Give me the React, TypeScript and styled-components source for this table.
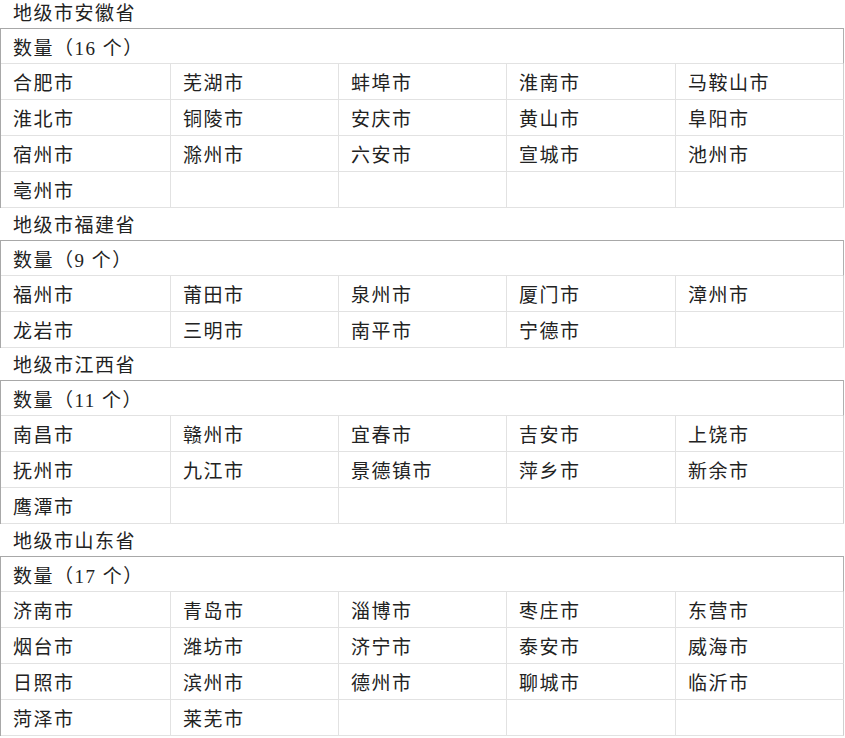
import styled, { createGlobalStyle } from "styled-components";

interface Province {
  name: string
  cities: string[]
}

const provinces: Province[] = [
  {
    name: "安徽省",
    cities: ["合肥市", "芜湖市", "蚌埠市", "淮南市", "马鞍山市", "淮北市", "铜陵市", "安庆市", "黄山市", "阜阳市", "宿州市", "滁州市", "六安市", "宣城市", "池州市", "亳州市"],
  },
  {
    name: "福建省",
    cities: ["福州市", "莆田市", "泉州市", "厦门市", "漳州市", "龙岩市", "三明市", "南平市", "宁德市"],
  },
  {
    name: "江西省",
    cities: ["南昌市", "赣州市", "宜春市", "吉安市", "上饶市", "抚州市", "九江市", "景德镇市", "萍乡市", "新余市", "鹰潭市"],
  },
  {
    name: "山东省",
    cities: ["济南市", "青岛市", "淄博市", "枣庄市", "东营市", "烟台市", "潍坊市", "济宁市", "泰安市", "威海市", "日照市", "滨州市", "德州市", "聊城市", "临沂市", "菏泽市", "莱芜市"],
  },
]

const GlobalStyle = createGlobalStyle`
body {
  margin: 0;
  background: #fff;
  font-family: "Liberation Serif", "Noto Sans CJK SC", serif;
  color: #222;
}
`

export default function App() {
  return (
    <>
      <GlobalStyle />
      <Page>
        {provinces.map((p, i) => {
          const padded = [...p.cities]
          while (padded.length % 5 !== 0) padded.push("")
          return (
            <Section key={p.name}>
              <Title first={i === 0}>地级市{p.name}</Title>
              <Table>
                <HeaderRow>数量（{p.cities.length} 个）</HeaderRow>
                {padded.map((c, j) => (
                  <Cell key={j} last={j % 5 === 4}>{c}</Cell>
                ))}
              </Table>
            </Section>
          )
        })}
      </Page>
    </>
  )
}

const Page = styled.div`
width: 845px;
display: flex;
flex-direction: column;
`

const Section = styled.div`
display: flex;
flex-direction: column;
`

const Title = styled.div<{ first?: boolean }>`
height: ${(props) => (props.first ? "28px" : "32px")};
box-sizing: border-box;
display: flex;
align-items: ${(props) => (props.first ? "flex-start" : "center")};
padding-top: ${(props) => (props.first ? "1px" : "4px")};
padding-left: 13px;
font-size: 19px;
letter-spacing: 1.5px;
line-height: 26px;
`

const Table = styled.div`
display: grid;
grid-template-columns: 170px 168px 168px 169px 168px;
width: 843px;
border-left: 1px solid #a8a8a8;
box-sizing: border-box;
`

const HeaderRow = styled.div`
grid-column: 1 / -1;
height: 36px;
box-sizing: border-box;
border-top: 1px solid #a8a8a8;
border-right: 1px solid #b0b0b0;
border-bottom: 1px solid #e2e2e2;
display: flex;
align-items: center;
padding-left: 12px;
font-size: 19px;
letter-spacing: 1.5px;
`

const Cell = styled.div<{ last?: boolean }>`
height: 36px;
box-sizing: border-box;
border-right: 1px solid ${(props) => (props.last ? "#d0d0d0" : "#e2e2e2")};
border-bottom: 1px solid #e2e2e2;
display: flex;
align-items: center;
padding-left: 12px;
font-size: 19px;
letter-spacing: 1.5px;
white-space: nowrap;
`
